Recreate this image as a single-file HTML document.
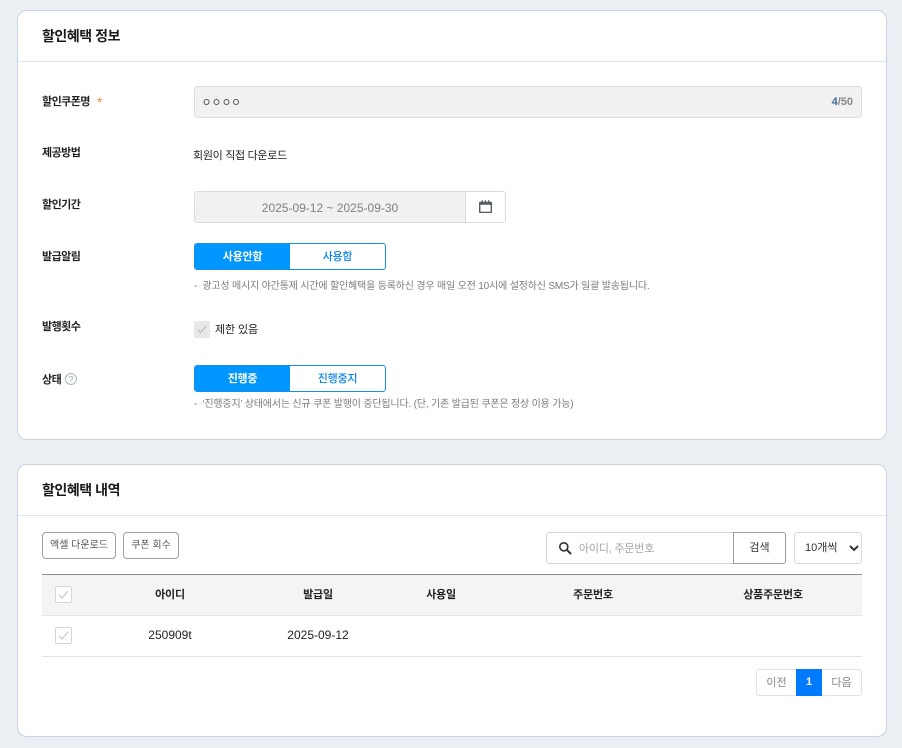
<!DOCTYPE html>
<html lang="ko"><head><meta charset="utf-8"><title>할인혜택</title>
<style>
html,body{margin:0;padding:0}
body{width:902px;height:748px;background:#ebeef3;position:relative;overflow:hidden;font-family:"Liberation Sans","Noto Sans CJK KR",sans-serif;color:#222}
.a{position:absolute;box-sizing:border-box;white-space:nowrap}
.card{background:#fff;border:1px solid #c9d3de;border-radius:10px;left:17px;width:870px}
.line{left:18px;width:868px;height:1px;background:#e1e4e9}
.h{left:42px;font-size:14px;font-weight:700;line-height:20px;color:#1a1a1a;letter-spacing:-.45px}
.l{left:42px;font-size:11px;font-weight:700;line-height:16px;color:#222;letter-spacing:-.55px}
.box{background:#f1f1f2;border:1px solid #d8dde5;border-radius:3px}
.tog{left:194px;width:192px;height:27px;border:1px solid #1a8fe8;border-radius:3px;background:#fff;overflow:hidden}
.tog div{position:absolute;top:0;height:25px;line-height:26px;text-align:center;font-size:11px;font-weight:500;letter-spacing:-.25px}
.tog .on{left:0;width:95px;background:#0096ff;color:#fff;font-weight:700}
.tog .off{left:95px;width:95px;color:#0a84e8}
.note{left:194px;font-size:10px;line-height:14px;color:#7c7c7c;letter-spacing:-.18px}
.cb{width:17px;height:17px;border:1px solid #d6d6d6;background:#fff;border-radius:2px}
.btn{background:#fff;border:1px solid #9a9fa6;border-radius:4px;height:27px;line-height:26px;text-align:center;font-size:10px;color:#555}
.th{font-size:11px;font-weight:700;line-height:16px;color:#222;text-align:center;letter-spacing:-.2px}
.td{font-size:12px;line-height:16px;color:#222;text-align:center}
</style></head><body>

<div class="a card" style="top:10px;height:430px"></div>
<div class="a line" style="top:61px"></div>
<div class="a h" style="top:26px">할인혜택 정보</div>

<div class="a l" style="top:94px">할인쿠폰명</div>
<div class="a" style="left:97px;top:95px;font-size:14px;line-height:14px;color:#f08a3c">*</div>
<div class="a box" style="left:194px;top:86px;width:668px;height:32px"></div>
<svg class="a" style="left:203px;top:98px" width="37" height="9" fill="none" stroke="#555" stroke-width="1"><circle cx="3.5" cy="4" r="2.5"/><circle cx="13.5" cy="4" r="2.5"/><circle cx="23.5" cy="4" r="2.5"/><circle cx="33" cy="4" r="2.5"/></svg>
<div class="a" style="right:49px;top:95px;font-size:11px;font-weight:700;line-height:14px;color:#888"><span style="color:#3d6d9a">4</span>/50</div>

<div class="a l" style="top:145px">제공방법</div>
<div class="a" style="left:193px;top:148px;font-size:11px;line-height:16px;color:#222;letter-spacing:-.3px">회원이 직접 다운로드</div>

<div class="a l" style="top:197px">할인기간</div>
<div class="a box" style="left:194px;top:191px;width:272px;height:32px;border-radius:3px 0 0 3px;text-align:center;font-size:12px;line-height:32px;color:#808080">2025-09-12 ~ 2025-09-30</div>
<div class="a" style="left:465px;top:191px;width:41px;height:32px;border:1px solid #d8dde5;border-radius:0 3px 3px 0;background:#fff"></div>
<svg class="a" style="left:479px;top:200px" width="14" height="14" viewBox="0 0 14 14"><path d="M1 1.8h11a1 1 0 0 1 1 1v9.2a1 1 0 0 1-1 1H1a1 1 0 0 1-1-1V2.8a1 1 0 0 1 1-1z" fill="#555c64"/><rect x="1.4" y="4.8" width="10.2" height="6.9" fill="#fff"/><rect x="2.5" y="0.3" width="1.4" height="2.5" fill="#555c64"/><rect x="5.8" y="0.3" width="1.4" height="2.5" fill="#555c64"/><rect x="9.1" y="0.3" width="1.4" height="2.5" fill="#555c64"/></svg>

<div class="a l" style="top:249px">발급알림</div>
<div class="a tog" style="top:243px"><div class="on">사용안함</div><div class="off">사용함</div></div>
<div class="a note" style="top:280px">-&nbsp; 광고성 메시지 야간통제 시간에 할인혜택을 등록하신 경우 매일 오전 10시에 설정하신 SMS가 일괄 발송됩니다.</div>

<div class="a l" style="top:319px">발행횟수</div>
<div class="a" style="left:194px;top:321px;width:16px;height:17px;background:#e8e8e8;border-radius:1px"></div>
<svg class="a" style="left:197px;top:325px" width="10" height="9" viewBox="0 0 10 9" fill="none" stroke="#b5b5b5" stroke-width="1"><path d="M1 5l2.5 2.5L9 1.5"/></svg>
<div class="a" style="left:215px;top:322px;font-size:11px;line-height:16px;color:#222;letter-spacing:-.1px">제한 있음</div>

<div class="a l" style="top:372px">상태</div>
<svg class="a" style="left:65px;top:373px" width="12" height="12" viewBox="0 0 12 12"><circle cx="6" cy="6" r="5.5" fill="none" stroke="#aab4c0"/><text x="6" y="9" font-size="8" text-anchor="middle" fill="#8a96a4" font-family="Liberation Sans">?</text></svg>
<div class="a tog" style="top:365px"><div class="on">진행중</div><div class="off">진행중지</div></div>
<div class="a note" style="top:398px">-&nbsp; ‘진행중지’ 상태에서는 신규 쿠폰 발행이 중단됩니다. (단, 기존 발급된 쿠폰은 정상 이용 가능)</div>

<div class="a card" style="top:464px;height:273px"></div>
<div class="a line" style="top:515px"></div>
<div class="a h" style="top:480px">할인혜택 내역</div>

<div class="a btn" style="left:42px;top:532px;width:74px">엑셀 다운로드</div>
<div class="a btn" style="left:123px;top:532px;width:56px">쿠폰 회수</div>

<div class="a" style="left:546px;top:532px;width:188px;height:32px;border:1px solid #d3d5d9;border-radius:3px 0 0 3px;background:#fff"></div>
<svg class="a" style="left:558px;top:541px" width="14" height="14" viewBox="0 0 14 14" fill="none" stroke="#333" stroke-width="1.6"><circle cx="5.8" cy="5.8" r="4"/><path d="M8.8 8.8L13 13" stroke-width="2"/></svg>
<div class="a" style="left:579px;top:541px;font-size:11px;line-height:16px;color:#a5a5a5;letter-spacing:-.2px">아이디, 주문번호</div>
<div class="a btn" style="left:733px;top:532px;width:53px;height:32px;line-height:30px;border-radius:0 3px 3px 0;font-size:11px;color:#333">검색</div>
<div class="a" style="left:794px;top:532px;width:68px;height:32px;border:1px solid #d8dde5;border-radius:3px;background:#fff;font-size:11px;line-height:30px;padding-left:10px;color:#333">10개씩</div>
<svg class="a" style="left:849px;top:545px" width="10" height="7" viewBox="0 0 10 7" fill="none" stroke="#333" stroke-width="2"><path d="M1 1l4 4 4-4"/></svg>

<div class="a" style="left:42px;top:574px;width:820px;height:42px;background:#f4f4f4;border-top:1px solid #8c8c8c;border-bottom:1px solid #e3e5e8"></div>
<div class="a cb" style="left:55px;top:586px"></div>
<svg class="a" style="left:58px;top:590px" width="11" height="9" viewBox="0 0 11 9" fill="none" stroke="#c2c2c2" stroke-width="1"><path d="M1 5l3 3 6-7"/></svg>
<div class="a th" style="left:120px;top:587px;width:100px">아이디</div>
<div class="a th" style="left:268px;top:587px;width:100px">발급일</div>
<div class="a th" style="left:391px;top:587px;width:100px">사용일</div>
<div class="a th" style="left:543px;top:587px;width:100px">주문번호</div>
<div class="a th" style="left:723px;top:587px;width:100px">상품주문번호</div>

<div class="a cb" style="left:55px;top:627px"></div>
<svg class="a" style="left:58px;top:631px" width="11" height="9" viewBox="0 0 11 9" fill="none" stroke="#c2c2c2" stroke-width="1"><path d="M1 5l3 3 6-7"/></svg>
<div class="a td" style="left:120px;top:627px;width:100px">250909t</div>
<div class="a td" style="left:268px;top:627px;width:100px">2025-09-12</div>
<div class="a" style="left:42px;top:656px;width:820px;height:1px;background:#e3e5e8"></div>

<div class="a" style="left:756px;top:669px;width:106px;height:27px;border:1px solid #dfe2e6;border-radius:3px;background:#fff"></div>
<div class="a" style="left:757px;top:669px;width:39px;height:27px;line-height:28px;text-align:center;font-size:11px;color:#888">이전</div>
<div class="a" style="left:796px;top:669px;width:26px;height:27px;line-height:27px;text-align:center;font-size:11px;font-weight:700;color:#fff;background:#007bff">1</div>
<div class="a" style="left:822px;top:669px;width:39px;height:27px;line-height:28px;text-align:center;font-size:11px;color:#888">다음</div>

</body></html>
